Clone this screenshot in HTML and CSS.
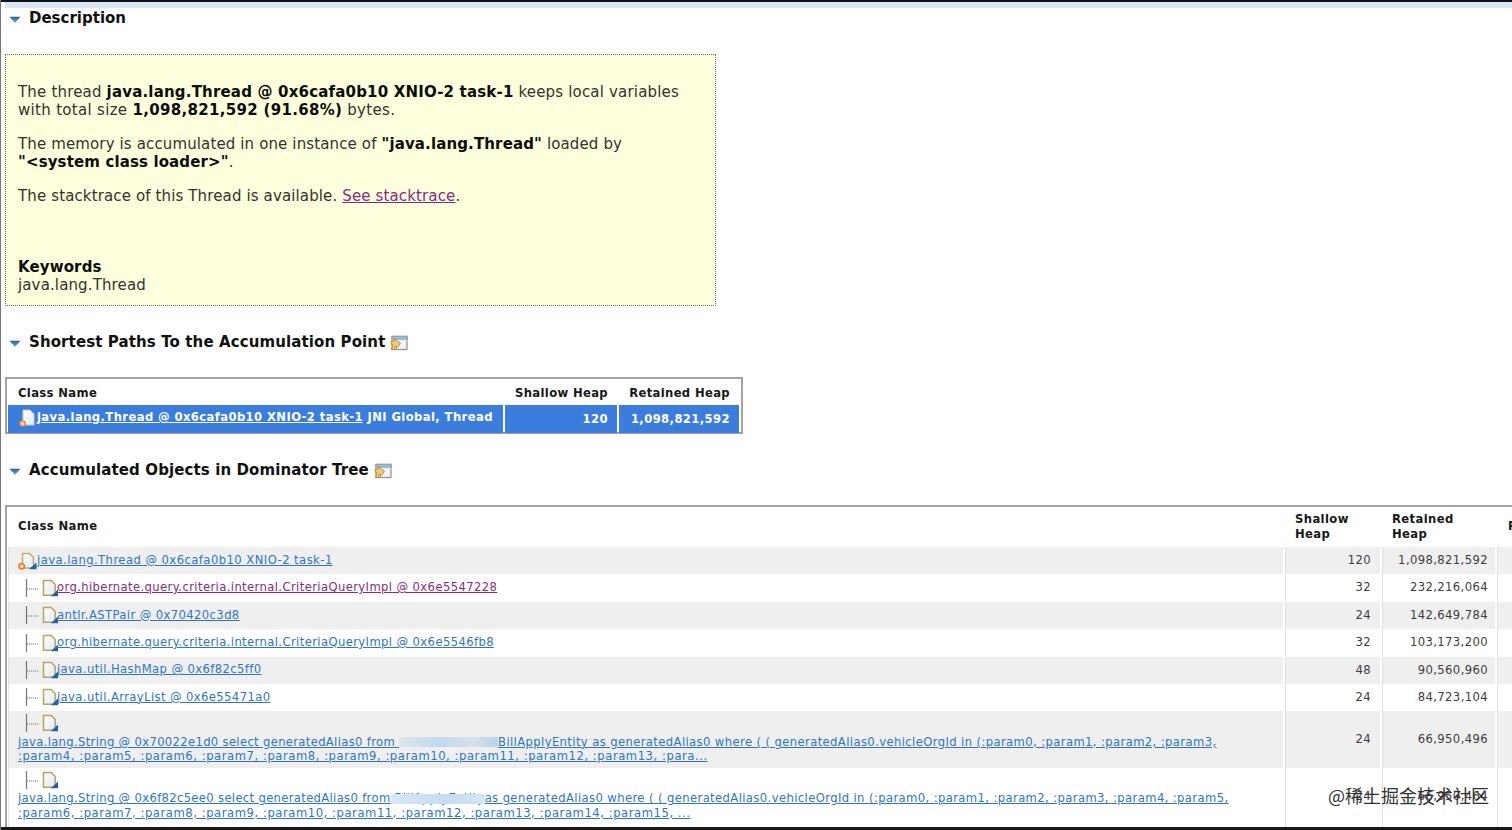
FILE: index.html
```html
<!DOCTYPE html>
<html lang="en">
<head>
<meta charset="utf-8">
<title>Leak Suspects</title>
<link rel="stylesheet" href="styles.css">
</head>
<body>
<svg class="defs" width="0" height="0">
  <defs>
    <linearGradient id="tri" x1="0" y1="0" x2="0" y2="1"><stop offset="0" stop-color="#2b5c8c"/><stop offset="1" stop-color="#6fb4e6"/></linearGradient>
    <linearGradient id="paper" x1="0" y1="0" x2="1" y2="1"><stop offset="0" stop-color="#ffffff"/><stop offset="1" stop-color="#dfe8f3"/></linearGradient>
    <symbol id="arrow" viewBox="0 0 12 8"><path d="M.5 .8H11.5L6 7Z" fill="url(#tri)"/></symbol>
    <symbol id="open" viewBox="0 0 18 16"><rect x="2" y="1.5" width="15" height="13" fill="#f1f5fa" stroke="#8e918c" stroke-width="1.2"/><path d="M2 1.2H17V4.2H2Z" fill="#a5c2e2" stroke="#7593b8" stroke-width=".8"/><path d="M1 6H4.5V3.5L10.5 8.5L6 13.5V11L4 14.5H1.5L3 10L1 9Z" fill="#efc878" stroke="#c48f3c" stroke-width="1"/></symbol>
    <symbol id="doc" viewBox="0 0 17 18"><path d="M1.5 1.5H9.2L13.2 5.5V16.2H1.5Z" fill="url(#paper)" stroke="#b9a45c" stroke-width="1.5"/><path d="M16 10.5V17.3H8.8Z" fill="#22609f"/></symbol>
    <symbol id="branch" viewBox="0 0 14 18"><path d="M1.5 0V18" stroke="#777" stroke-width="1.2"/><path d="M2 10H14" stroke="#777" stroke-width="1.2" stroke-dasharray="1.2 .8"/></symbol>
  </defs>
</svg>
<main class="report">
  <div class="topbar"><i></i></div>
  <h2 class="title first"><svg class="arrow"><use href="#arrow"/></svg><span>Description</span></h2>
  <section class="note">
    <p><span class="n1">The thread <b>java.lang.Thread @ 0x6cafa0b10 XNIO-2 task-1</b> keeps local variables</span><br><span class="n2">with total size <b>1,098,821,592 (91.68%)</b> bytes.</span></p>
    <p>The memory is accumulated in one instance of <b>"java.lang.Thread"</b> loaded by<br><b>"&lt;system class loader&gt;"</b>.</p>
    <p>The stacktrace of this Thread is available. <a class="seen" href="#">See stacktrace</a>.</p>
    <p class="keys"><b>Keywords</b><br>java.lang.Thread</p>
  </section>
  <h2 class="title second"><svg class="arrow"><use href="#arrow"/></svg><span>Shortest Paths To the Accumulation Point</span><svg class="open"><use href="#open"/></svg></h2>
  <section class="paths">
    <div class="prow phead"><span>Class Name</span><span class="num">Shallow Heap</span><span class="num">Retained Heap</span></div>
    <div class="prow pbody">
      <span class="pname"><svg class="sdoc" viewBox="0 0 17 18"><path d="M4 1H11L15 5V16H4Z" fill="url(#paper)" stroke="#d9c99a"/><circle cx="3.5" cy="14.5" r="2.6" fill="#ffd9b0" stroke="#e98536" stroke-width="1.4"/></svg><a href="#">java.lang.Thread @ 0x6cafa0b10 XNIO-2 task-1</a>&nbsp;JNI Global, Thread</span>
      <span class="num">120</span><span class="num">1,098,821,592</span>
    </div>
  </section>
  <h2 class="title third"><svg class="arrow"><use href="#arrow"/></svg><span>Accumulated Objects in Dominator Tree</span><svg class="open"><use href="#open"/></svg></h2>
  <section class="tree">
    <div class="row head"><span>Class Name</span><span>Shallow<br>Heap</span><span>Retained<br>Heap</span><span>Percentage</span></div>
    <div class="row odd"><span class="name root"><svg class="doc" viewBox="0 0 19 18"><path d="M4.5 1.5H11.5L15.5 5.5V16H4.5Z" fill="url(#paper)" stroke="#c9a45c" stroke-width="1.5"/><path d="M18.5 10.5V17.3H11Z" fill="#22609f"/><circle cx="3.7" cy="14.3" r="2.7" fill="#ffd2a8" stroke="#e9782e" stroke-width="1.5"/></svg><a href="#">java.lang.Thread @ 0x6cafa0b10 XNIO-2 task-1</a></span><span class="num">120</span><span class="num">1,098,821,592</span><span></span></div>
    <div class="row"><span class="name"><svg class="branch"><use href="#branch"/></svg><svg class="leaf"><use href="#doc"/></svg><a class="seen" href="#">org.hibernate.query.criteria.internal.CriteriaQueryImpl @ 0x6e5547228</a></span><span class="num">32</span><span class="num">232,216,064</span><span></span></div>
    <div class="row odd"><span class="name"><svg class="branch"><use href="#branch"/></svg><svg class="leaf"><use href="#doc"/></svg><a href="#">antlr.ASTPair @ 0x70420c3d8</a></span><span class="num">24</span><span class="num">142,649,784</span><span></span></div>
    <div class="row"><span class="name"><svg class="branch"><use href="#branch"/></svg><svg class="leaf"><use href="#doc"/></svg><a href="#">org.hibernate.query.criteria.internal.CriteriaQueryImpl @ 0x6e5546fb8</a></span><span class="num">32</span><span class="num">103,173,200</span><span></span></div>
    <div class="row odd"><span class="name"><svg class="branch"><use href="#branch"/></svg><svg class="leaf"><use href="#doc"/></svg><a href="#">java.util.HashMap @ 0x6f82c5ff0</a></span><span class="num">48</span><span class="num">90,560,960</span><span></span></div>
    <div class="row"><span class="name"><svg class="branch"><use href="#branch"/></svg><svg class="leaf"><use href="#doc"/></svg><a href="#">java.util.ArrayList @ 0x6e55471a0</a></span><span class="num">24</span><span class="num">84,723,104</span><span></span></div>
    <div class="row odd tall"><span class="long"><span class="name"><svg class="branch"><use href="#branch"/></svg><svg class="leaf"><use href="#doc"/></svg></span><a href="#"><span class="lead">java.lang.String @ 0x70022e1d0 select generatedAlias0 from </span><i class="smudge"></i>BillApplyEntity as generatedAlias0 where ( ( generatedAlias0.vehicleOrgId in (:param0, :param1, :param2, :param3,<br><span class="params">:param4, :param5, :param6, :param7, :param8, :param9, :param10, :param11, :param12, :param13, :para...</span></a></span><span class="num">24</span><span class="num">66,950,496</span><span></span></div>
    <div class="row tall last"><span class="long"><span class="name"><svg class="branch"><use href="#branch"/></svg><svg class="leaf"><use href="#doc"/></svg></span><a href="#"><span class="lead">java.lang.String @ 0x6f82c5ee0 select generatedAlias0 from</span><span class="covered">&nbsp;BillApplyEntity<i></i></span>as generatedAlias0 where ( ( generatedAlias0.vehicleOrgId in (:param0, :param1, :param2, :param3, :param4, :param5,<br><span class="params">:param6, :param7, :param8, :param9, :param10, :param11, :param12, :param13, :param14, :param15, ...</span></a></span><span class="num">24</span><span class="num">66,950,464</span><span></span></div>
  </section>
  <div class="bottombar"></div>
  <div class="watermark">@稀土掘金技术社区</div>
</main>
</body>
</html>
```
FILE: styles.css
```css
* { box-sizing: border-box; }
body { margin: 0; background: #fff; overflow: hidden; }
.defs { position: absolute; }
.report {
  position: relative;
  width: 1512px;
  height: 830px;
  overflow: hidden;
  border-left: 1px solid #777;
  font-family: "DejaVu Sans", Verdana, sans-serif;
  font-size: 15px;
  line-height: 18px;
  color: #33332d;
  display: flex;
  flex-direction: column;
}
.report > * { flex: none; }
b { color: #0c0c08; }
a { color: #2e75c8; text-decoration: underline; text-underline-offset: 1px; }
a.seen { color: #8c2a82; }
.topbar { height: 8px; border-top: 2px solid #15131a; padding-left: 4px; }
.topbar i { display: block; height: 6px; background: #d8e6ef; }
.title { margin: 0; height: 20px; display: flex; align-items: center; padding-left: 8px; font-size: 15px; letter-spacing: .11px; color: #101010; white-space: nowrap; }
.first { letter-spacing: 0; }
.arrow { width: 12px; height: 8px; margin: 3px 8px 0 0; }
.open { width: 18px; height: 16px; margin: 2px 0 0 5px; }
.note {
  width: 711px;
  height: 252px;
  margin: 26px 0 0 4px;
  padding: 28px 12px 0;
  background: #feffdd;
  border: 1px dotted #77776c;
  white-space: nowrap;
  letter-spacing: .13px;
}
.n1 { letter-spacing: .18px; }
.n2 { letter-spacing: .31px; }
.note p { margin: 0 0 16px; line-height: 18px; }
.note .keys { margin-top: 53px; }
.second { margin-top: 26px; }
.paths { width: 738px; height: 57px; margin: 25px 0 0 4px; border: 2px solid #a2a2a2; padding: 1px; font-size: 11.6px; letter-spacing: .4px; font-weight: bold; color: #181818; }
.prow { display: grid; grid-template-columns: 495px 112px 120px; column-gap: 2px; white-space: nowrap; }
.prow > span { padding: 0 9px; }
.prow > span:first-child { padding-left: 10px; }
.phead { height: 25px; line-height: 26px; letter-spacing: .35px; }
.pbody { height: 26px; line-height: 28px; color: #fff; }
.pbody > span { background: #3b7ddd; }
.pbody a { color: #fff; }
.prow > .pname { display: flex; line-height: 24px; padding-right: 0; }
.sdoc { width: 17px; height: 18px; margin: 4px 1px 0 1px; }
.num { text-align: right; }
.third { margin-top: 26px; }
.tree { width: 1600px; margin: 25px 0 0 4px; border: 2px solid #a2a2a2; border-bottom: 0; padding: 0 1px; height: 323px; overflow: hidden; font-size: 11.6px; letter-spacing: .39px; line-height: 14.5px; }
.row { display: grid; grid-template-columns: 1275px 95px 113px 110px; column-gap: 2px; height: 25.4px; margin-bottom: 2px; align-items: stretch; white-space: nowrap; }
.row > span { padding: 0 9px; border-left: 1px solid #e1e1e1; }
.row > span:nth-child(3) { padding-right: 7px; }
.odd > span { background: #efefef; }
.head { height: 39px; margin-bottom: 1px; font-weight: bold; color: #181818; align-items: center; }
.head > span { border-color: transparent; }
.head > span:last-child { padding-left: 10px; }
.row > .num { line-height: 27px; color: #3c3c3c; }
.name { display: flex; align-items: center; }
.name a { position: relative; top: -.5px; }
.doc { width: 19px; height: 18px; flex: none; }
.root { letter-spacing: .44px; }
.branch { width: 14px; height: 18px; margin-left: 7px; flex: none; }
.leaf { width: 17px; height: 18px; margin-left: 3px; margin-right: -2px; flex: none; }
.row.tall { height: 55px; }
.row.last { height: 59px; }
.tall > .num { line-height: 57px; }
.tall .long .name { height: 23.5px; }
.last .long .name { height: 23px; }
.lead { letter-spacing: .33px; }
.params { letter-spacing: .55px; }
.smudge { display: inline-block; width: 99px; height: 10px; vertical-align: -1px; background: linear-gradient(90deg, #dfe5ec, #c2d9ef 40%, #d5e0ea 75%, #b9d3ee); }
.covered { position: relative; }
.covered i { position: absolute; left: 0; right: 0; top: 3px; height: 10px; background: linear-gradient(90deg, #d9e8f7, #c5dcf3 60%, #d5e5f5); }
.bottombar { position: absolute; left: -1px; right: 0; bottom: 0; height: 3px; background: #191919; }
.watermark { position: absolute; left: 1327px; top: 782px; font: 18px/26px "Noto Sans CJK SC", sans-serif; color: #333; white-space: nowrap; }
```
